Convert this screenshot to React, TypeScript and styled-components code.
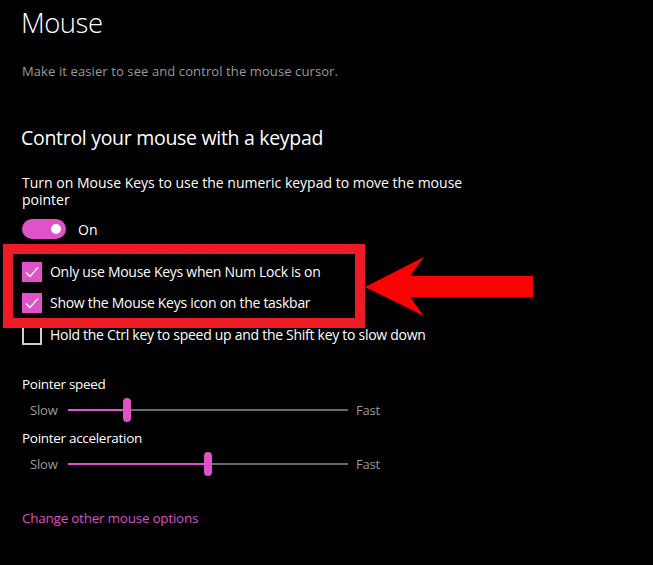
import * as React from "react";
import styled, { createGlobalStyle } from "styled-components";

const accent = "#e052c8";

const GlobalStyle = createGlobalStyle`
  html, body {
    margin: 0;
    padding: 0;
    background-color: #000000;
  }

  body {
    font-family: "Open Sans", "Noto Sans", sans-serif;
    color: #FFFFFF;
    overflow: hidden;
  }
`;

const SPage = styled.div`
  width: 653px;
  height: 565px;
  padding: 0 22px;
  box-sizing: border-box;
  background-color: #000000;
`;

const STitle = styled.h1`
  font-size: 27.5px;
  font-weight: 300;
  letter-spacing: -0.5px;
  line-height: 40px;
  margin: 3px 0 0 -1px;
`;

const SSubtitle = styled.p`
  color: #9a9a9a;
  font-size: 13px;
  letter-spacing: 0.1px;
  line-height: 18px;
  margin: 19px 0 0;
`;

const SSectionTitle = styled.h2`
  font-size: 19.5px;
  font-weight: 400;
  letter-spacing: -0.3px;
  line-height: 28px;
  margin: 44px 0 0 -1px;
`;

const SDescription = styled.p`
  font-size: 14px;
  line-height: 17px;
  margin: 22px 0 0;
  max-width: 460px;
`;

const SToggleRow = styled.div`
  align-items: center;
  display: flex;
  gap: 12px;
  height: 20px;
  margin-top: 11px;
  font-size: 14px;
`;

const SToggle = styled.div<{ on: boolean }>`
  align-items: center;
  background-color: ${props => (props.on ? accent : "transparent")};
  border-radius: 10px;
  box-sizing: border-box;
  display: flex;
  height: 20px;
  justify-content: ${props => (props.on ? "flex-end" : "flex-start")};
  padding: 0 5px;
  width: 44px;
`;

const SKnob = styled.span`
  background-color: #FFFFFF;
  border-radius: 50%;
  height: 10px;
  width: 10px;
`;

const SHighlightRow = styled.div`
  align-items: center;
  display: flex;
  margin: 5px 0 -3px -19px;
  position: relative;
  z-index: 1;
`;

const SHighlightBox = styled.div`
  border: 10px solid #ed1c24;
  box-sizing: border-box;
  display: flex;
  flex-direction: column;
  gap: 11px;
  padding: 8px 0 5px 9px;
  width: 362px;
`;

const SCheckRow = styled.label`
  align-items: center;
  display: flex;
  font-size: 14px;
  gap: 8px;
  height: 20px;
  letter-spacing: -0.28px;
  line-height: 20px;
  white-space: nowrap;
`;

const SCheckbox = styled.span<{ checked: boolean }>`
  align-items: center;
  background-color: ${props => (props.checked ? accent : "transparent")};
  border: ${props => (props.checked ? "none" : "2px solid #cfcfcf")};
  box-sizing: border-box;
  display: flex;
  flex: 0 0 auto;
  height: 20px;
  justify-content: center;
  width: 20px;
`;

const SFieldLabel = styled.div<{ top: number }>`
  font-size: 13.5px;
  letter-spacing: -0.3px;
  line-height: 20px;
  margin-top: ${props => props.top}px;
`;

const SSliderRow = styled.div`
  align-items: center;
  display: flex;
  gap: 8px;
  height: 24px;
  margin-top: 4px;
  padding-left: 8px;
`;

const SSliderText = styled.span`
  color: #9a9a9a;
  font-size: 13px;
  letter-spacing: -0.2px;
  width: 30px;
`;

const STrack = styled.div`
  align-items: center;
  background-color: #6a6a6a;
  display: flex;
  height: 2px;
  margin-right: 0;
  width: 280px;
`;

const SFill = styled.div`
  align-items: center;
  background-color: ${accent};
  display: flex;
  height: 2px;
  justify-content: flex-end;
`;

const SThumb = styled.div`
  background-color: ${accent};
  border-radius: 4px;
  flex: 0 0 auto;
  height: 24px;
  margin-right: -4px;
  width: 8px;
`;

const SLink = styled.a`
  color: #d94fc4;
  display: block;
  font-size: 13.5px;
  letter-spacing: -0.25px;
  line-height: 20px;
  margin-top: 32px;
  text-decoration: none;
`;

const CheckMark = () => (
  <svg width="14" height="12" viewBox="0 0 14 12">
    <path d="M1 6.5 L5 10.5 L13 1.5" fill="none" stroke="#FFFFFF" strokeWidth="1.4" />
  </svg>
);

const Arrow = () => (
  <svg width="168" height="59" viewBox="0 0 168 59">
    <polygon points="0,30 59,0 45,19 168,19 168,40 45,40 59,59" fill="#ff0000" />
  </svg>
);

interface ICheckProps {
  checked: boolean;
  children: React.ReactNode;
}

const Check = ({ checked, children }: ICheckProps) => (
  <SCheckRow>
    <SCheckbox checked={checked}>{checked && <CheckMark />}</SCheckbox>
    {children}
  </SCheckRow>
);

const Slider = ({ value }: { value: number }) => (
  <SSliderRow>
    <SSliderText>Slow</SSliderText>
    <STrack>
      <SFill style={{ width: `${value}%` }}>
        <SThumb />
      </SFill>
    </STrack>
    <SSliderText>Fast</SSliderText>
  </SSliderRow>
);

const App = () => (
  <>
    <GlobalStyle />
    <SPage>
      <STitle>Mouse</STitle>
      <SSubtitle>Make it easier to see and control the mouse cursor.</SSubtitle>
      <SSectionTitle>Control your mouse with a keypad</SSectionTitle>
      <SDescription>
        Turn on Mouse Keys to use the numeric keypad to move the mouse pointer
      </SDescription>
      <SToggleRow>
        <SToggle on>
          <SKnob />
        </SToggle>
        On
      </SToggleRow>
      <SHighlightRow>
        <SHighlightBox>
          <Check checked>Only use Mouse Keys when Num Lock is on</Check>
          <Check checked>Show the Mouse Keys icon on the taskbar</Check>
        </SHighlightBox>
        <Arrow />
      </SHighlightRow>
      <Check checked={false}>
        Hold the Ctrl key to speed up and the Shift key to slow down
      </Check>
      <SFieldLabel top={29}>Pointer speed</SFieldLabel>
      <Slider value={21} />
      <SFieldLabel top={6}>Pointer acceleration</SFieldLabel>
      <Slider value={50} />
      <SLink href="#">Change other mouse options</SLink>
    </SPage>
  </>
);

export default App;
